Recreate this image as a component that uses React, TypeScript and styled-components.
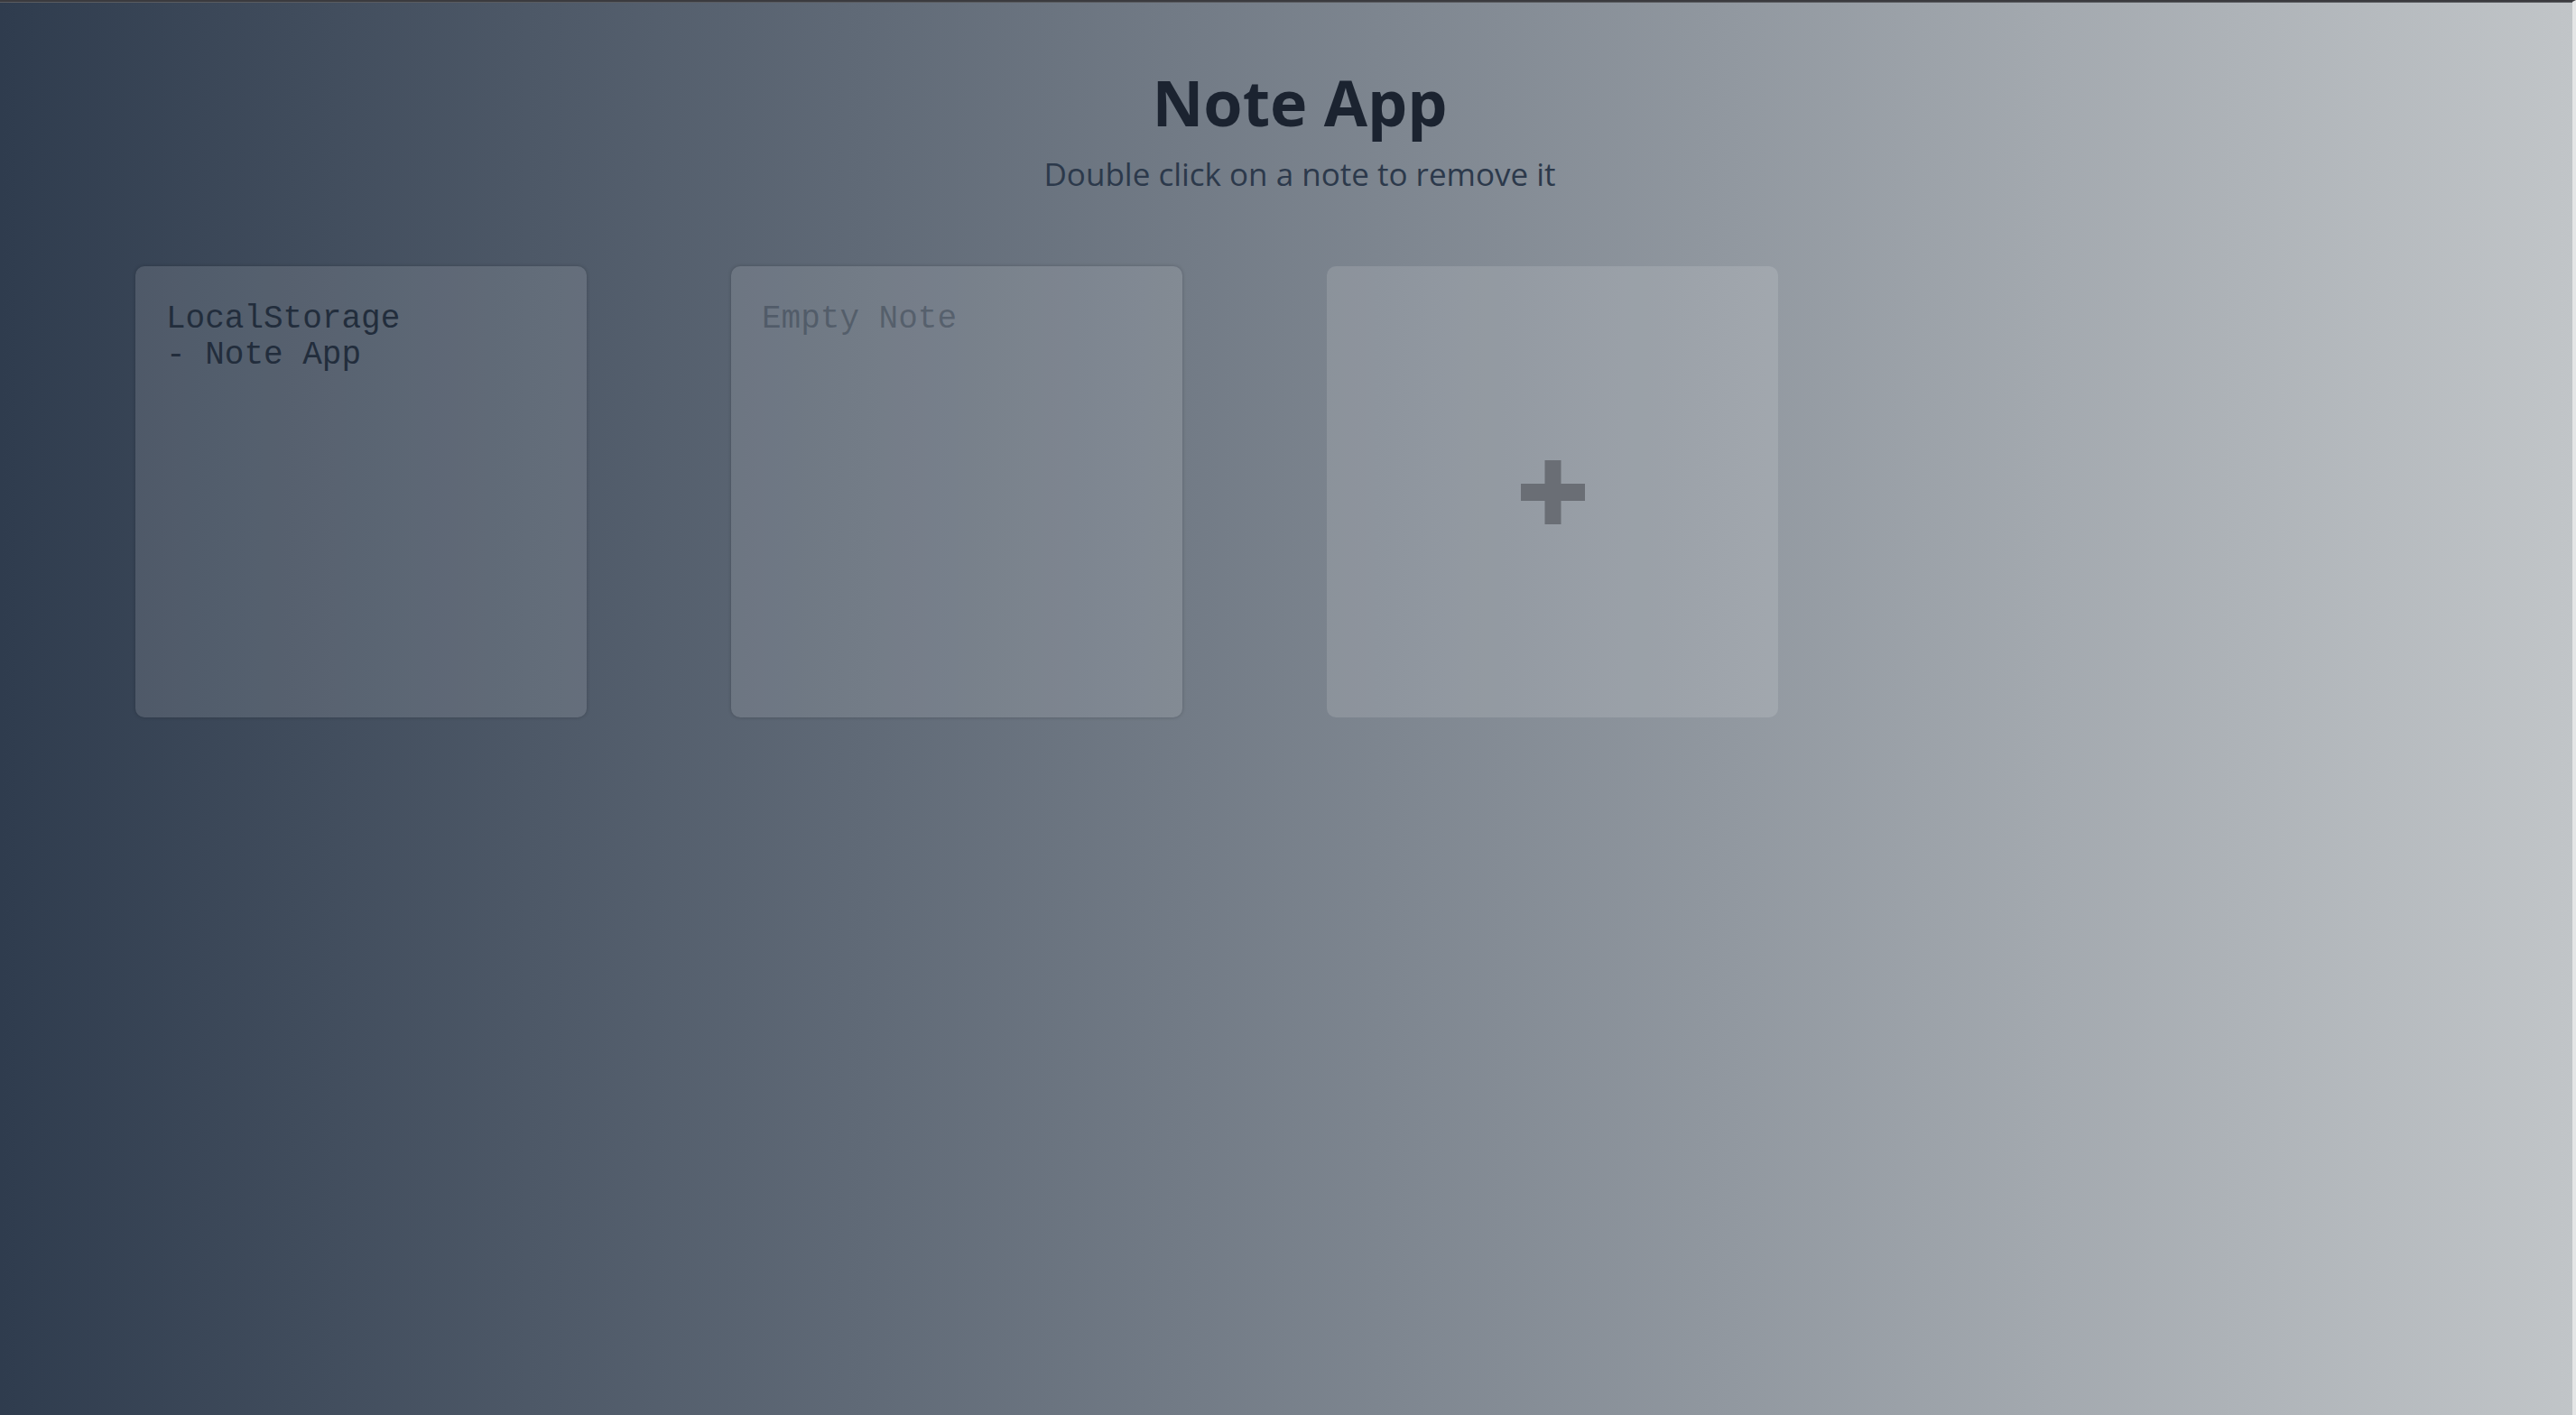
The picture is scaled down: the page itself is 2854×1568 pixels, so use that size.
import React from "react";
import styled, { createGlobalStyle } from "styled-components";

const GlobalStyle = createGlobalStyle`
  html, body {
    margin: 0;
    padding: 0;
    height: 100%;
  }
  body {
    background: linear-gradient(to right, #2f3c4e 0%, #c1c5c8 100%);
    font-family: "Open Sans", "Noto Sans", sans-serif;
  }
  #root {
    min-height: 100%;
  }
`;

const Frame = styled.div`
  position: relative;
  box-sizing: border-box;
  min-height: 100vh;
  border-top: 2px solid #3b3b3f;
  border-right: 4px solid #e4e5e6;

  &::before {
    content: "";
    position: absolute;
    top: 0;
    left: 0;
    right: 0;
    height: 1px;
    background: #5a5c60;
  }
`;

const AppShell = styled.main`
  display: flex;
  flex-direction: column;
  padding-top: 1px;
`;

const Header = styled.header`
  display: flex;
  flex-direction: column;
  align-items: center;
  padding: 75px 0 0 30px;
`;

const Title = styled.h1`
  margin: 0;
  font-family: "Open Sans", "Noto Sans", sans-serif;
  font-stretch: 88%;
  font-weight: 700;
  font-size: 70px;
  line-height: 1;
  color: #1b2330;
`;

const Subtitle = styled.p`
  margin: 27px 0 0;
  font-family: "Open Sans", "Noto Sans", sans-serif;
  font-stretch: 100%;
  font-weight: 400;
  font-size: 35px;
  line-height: 1;
  color: #2c394b;
`;

const NotesGrid = styled.section`
  display: grid;
  grid-template-columns: repeat(3, 500px);
  gap: 160px;
  padding: 85px 0 0 150px;
`;

const cardBase = `
  box-sizing: border-box;
  width: 500px;
  height: 500px;
  border-radius: 10px;
  background: rgba(255, 255, 255, 0.12);
  box-shadow: 0 0 4px rgba(0, 0, 0, 0.2);
`;

const NoteArea = styled.textarea`
  ${cardBase}
  display: block;
  margin: 0;
  border: none;
  outline: none;
  resize: none;
  padding: 39px 34px 34px;
  font-family: "Liberation Mono", "Courier New", monospace;
  font-size: 36px;
  line-height: 1.12;
  color: #222d3c;
  overflow: hidden;

  &::placeholder {
    color: rgba(34, 46, 60, 0.38);
  }
`;

const AddButton = styled.button`
  ${cardBase}
  display: flex;
  align-items: center;
  justify-content: center;
  border: none;
  padding: 0;
  cursor: pointer;
  background: rgba(255, 255, 255, 0.13);
  box-shadow: none;
`;

const PlusIcon = () => (
  <svg width="71" height="71" viewBox="0 0 71 71" aria-hidden="true">
    <rect x="26.5" y="0" width="18" height="71" fill="#6a6e75" />
    <rect x="0" y="26" width="71" height="19" fill="#6a6e75" />
  </svg>
);

const notes = [
  { id: 1, content: "LocalStorage\n- Note App" },
  { id: 2, content: "" },
];

export default function App() {
  return (
    <>
      <GlobalStyle />
      <Frame>
        <AppShell>
          <Header>
            <Title>Note App</Title>
            <Subtitle>Double click on a note to remove it</Subtitle>
          </Header>
          <NotesGrid>
            {notes.map((n) => (
              <NoteArea
                key={n.id}
                defaultValue={n.content}
                placeholder="Empty Note"
              />
            ))}
            <AddButton type="button" aria-label="Add note">
              <PlusIcon />
            </AddButton>
          </NotesGrid>
        </AppShell>
      </Frame>
    </>
  );
}
